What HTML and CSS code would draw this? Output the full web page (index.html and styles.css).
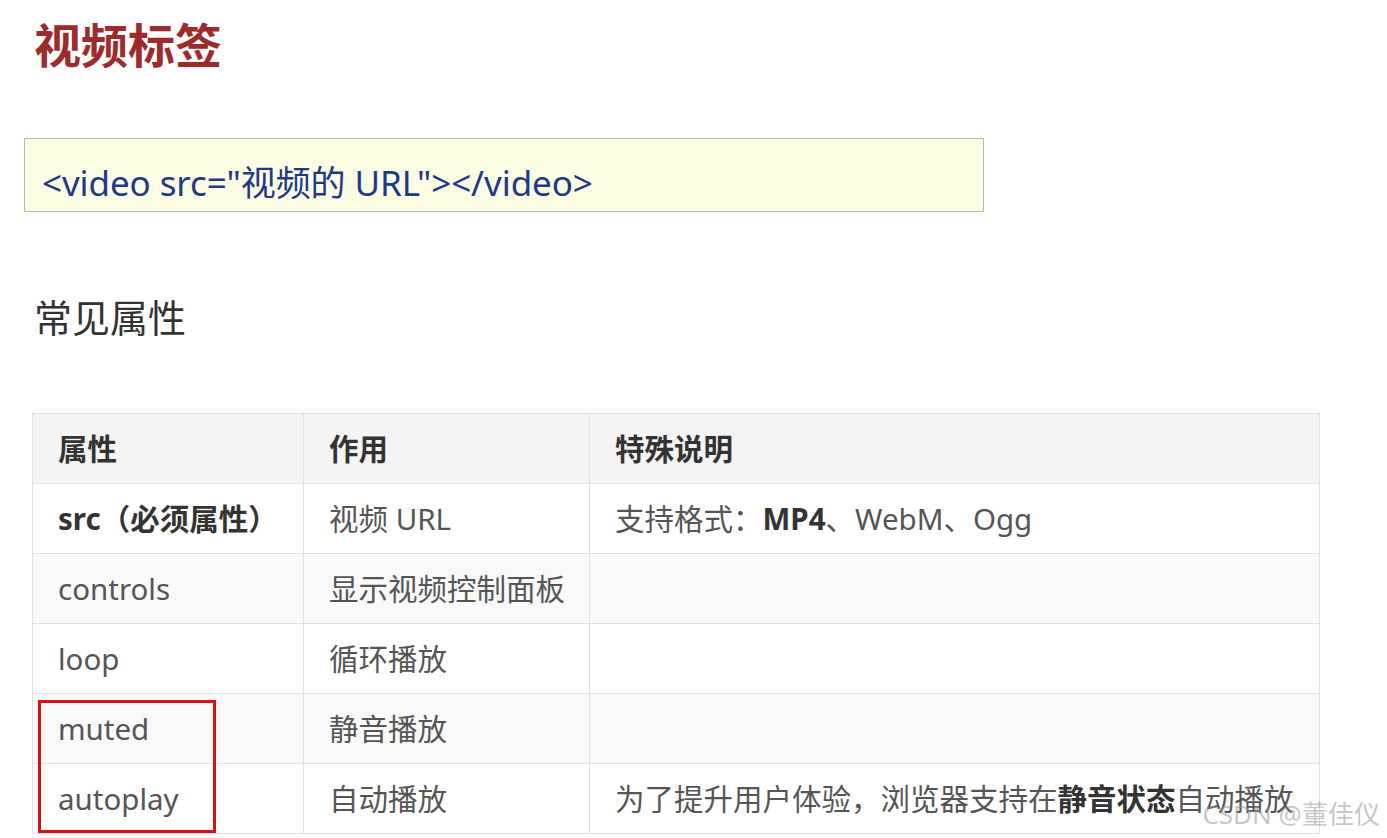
FILE: index.html
```html
<!DOCTYPE html>
<html lang="zh">
<head>
<meta charset="utf-8">
<link rel="stylesheet" href="styles.css">
</head>
<body>
<div class="page">
  <h1 class="title">视频标签</h1>
  <div class="code">&lt;video src="视频的 URL"&gt;&lt;/video&gt;</div>
  <h2 class="subtitle">常见属性</h2>
  <div class="table-wrap">
    <table class="attrs">
      <colgroup>
        <col class="c1"><col class="c2"><col class="c3">
      </colgroup>
      <thead>
        <tr><th>属性</th><th>作用</th><th>特殊说明</th></tr>
      </thead>
      <tbody>
        <tr><td><b>src（必须属性）</b></td><td>视频 URL</td><td>支持格式：<b>MP4</b>、WebM、Ogg</td></tr>
        <tr class="alt"><td>controls</td><td>显示视频控制面板</td><td></td></tr>
        <tr><td>loop</td><td>循环播放</td><td></td></tr>
        <tr class="alt"><td>muted</td><td>静音播放</td><td></td></tr>
        <tr><td>autoplay</td><td>自动播放</td><td>为了提升用户体验，浏览器支持在<b>静音状态</b>自动播放</td></tr>
      </tbody>
    </table>
    <div class="mark"></div>
  </div>
  <div class="watermark">CSDN @董佳仪</div>
</div>
</body>
</html>
```
FILE: styles.css
```css
* { box-sizing: border-box; }
html, body { margin: 0; padding: 0; background: #fff; }
body {
  font-family: "Noto Sans", "Noto Sans CJK SC", sans-serif;
  width: 1387px;
  height: 838px;
  overflow: hidden;
}
.page {
  position: relative;
  height: 838px;
  padding: 12px 0 0 0;
}
.title {
  margin: 0 0 0 34px;
  font-size: 47px;
  line-height: 66px;
  font-weight: 700;
  color: #9c2b2b;
}
.code {
  margin: 60px 0 0 24px;
  width: 960px;
  height: 74px;
  background: #fdfde6;
  border: 1px solid #b8b8b0;
  padding: 21px 0 0 17px;
  font-size: 35px;
  line-height: 46px;
  color: #1e3a86;
  letter-spacing: -0.1px;
}
.subtitle {
  margin: 80px 0 0 34px;
  font-size: 38px;
  line-height: 50px;
  font-weight: 400;
  color: #333;
}
.table-wrap {
  position: relative;
  margin: 71px 0 0 32px;
  width: 1287px;
}
.attrs {
  width: 1287px;
  border-collapse: collapse;
  table-layout: fixed;
  font-size: 29.5px;
  color: #555;
}
.attrs col.c1 { width: 271px; }
.attrs col.c2 { width: 286px; }
.attrs col.c3 { width: 730px; }
.attrs th, .attrs td {
  border: 1px solid #e2e2e2;
  height: 70px;
  padding: 0 0 0 25px;
  text-align: left;
  vertical-align: middle;
  white-space: nowrap;
  line-height: 40px;
}
.attrs th {
  background: #f4f4f4;
  color: #333;
  font-weight: 700;
}
.attrs td b { color: #333; font-weight: 700; }
.attrs tr.alt td { background: #f9f9f9; }
.mark {
  position: absolute;
  left: 6px;
  top: 287px;
  width: 178px;
  height: 133px;
  border: 3px solid #d50f14;
}
.watermark {
  position: absolute;
  right: 7px;
  bottom: 8px;
  font-size: 26px;
  color: rgba(150, 150, 150, 0.55);
  line-height: 32px;
}
```
